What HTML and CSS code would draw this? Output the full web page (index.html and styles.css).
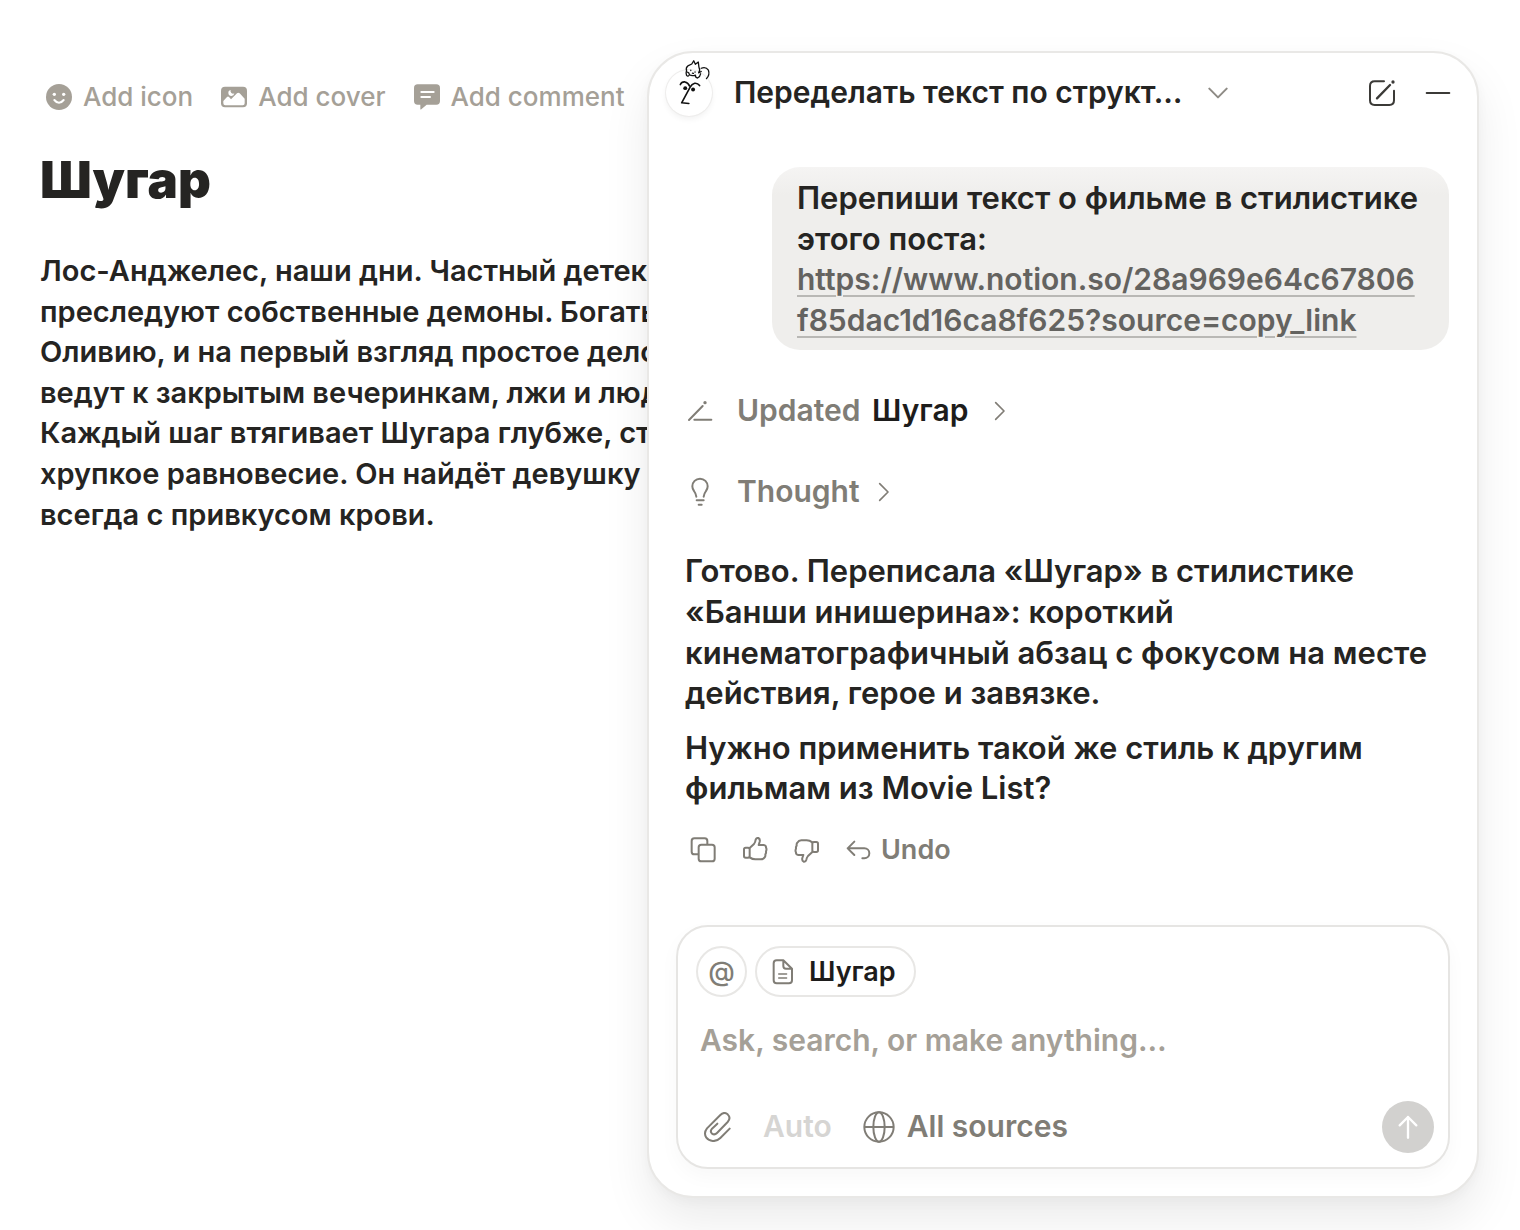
FILE: index.html
```html
<!DOCTYPE html>
<html lang="ru">
<head>
<meta charset="utf-8">
<meta name="viewport" content="width=device-width, initial-scale=1">
<title>Шугар</title>
<link rel="stylesheet" href="styles.css">
</head>
<body>
<main class="page">
  <div class="page-tools">
    <button class="tool" type="button">
      <svg class="icon-26" viewBox="78 71 78 78" aria-hidden="true"><circle cx="117" cy="110" r="39" fill="currentColor"/><circle cx="103" cy="102" r="5" fill="#fff"/><circle cx="131" cy="102" r="5" fill="#fff"/><path d="M103 119Q117 136 131 119" fill="none" stroke="#fff" stroke-width="6" stroke-linecap="round"/></svg>
      <span>Add icon</span>
    </button>
    <button class="tool" type="button">
      <svg class="icon-26" viewBox="605 71 78 78" aria-hidden="true"><rect x="605" y="79" width="78" height="62" rx="12" fill="currentColor"/><path d="M612 122L623 110Q626 107 629 110L635 117L653 99Q657 96 661 99L676 115V129Q676 135 670 135H618Q612 135 612 129Z" fill="#fff"/><path d="M634 89A9 9 0 1 0 645 99A8 8 0 0 1 634 89Z" fill="#fff"/></svg>
      <span>Add cover</span>
    </button>
    <button class="tool" type="button">
      <svg class="icon-26" viewBox="250 70 78 78" aria-hidden="true"><path d="M261 71H317Q328 71 328 82V121Q328 132 317 132H288L272 146Q269 148 269 145V132H261Q250 132 250 121V82Q250 71 261 71Z" fill="currentColor"/><path d="M272 94H309M272 109H298" stroke="#fff" stroke-width="6" stroke-linecap="round"/></svg>
      <span>Add comment</span>
    </button>
  </div>
  <h1 class="page-title">Шугар</h1>
  <p class="page-text">Лос-Анджелес, наши дни. Частный детек<br>преследуют собственные демоны. Богаты<br>Оливию, и на первый взгляд простое дело<br>ведут к закрытым вечеринкам, лжи и люд<br>Каждый шаг втягивает Шугара глубже, ст<br>хрупкое равновесие. Он найдёт девушку<br>всегда с привкусом крови.</p>
</main>

<aside class="chat" aria-label="AI">
  <header class="chat-header">
    <div class="avatar">
      <svg class="avatar-art" viewBox="76 50 141 180" fill="none" stroke="#111" stroke-linecap="round" stroke-linejoin="round" aria-hidden="true">
        <path stroke-width="5" d="M120 134Q124 125 134 126Q144 128 148 138M179 137Q173 129 164 130Q155 132 150 142L124 190L146 192"/>
        <circle cx="135" cy="145" r="6" fill="#111" stroke="none"/><circle cx="159" cy="149" r="6" fill="#111" stroke="none"/>
        <path stroke-width="4" d="M139 91Q136 82 143 77L155 71L161 61L166 72L175 65L177 81Q182 90 176 98M139 91Q136 100 139 106Q144 111 148 104Q147 97 142 96M148 104Q156 109 166 105M166 105Q166 114 173 114Q180 111 182 101M184 84Q198 78 206 90Q211 104 200 116M176 98L184 94"/>
        <path stroke-width="4" d="M152 90V91M165 95V96M157 99L160 100"/>
      </svg>
    </div>
    <button class="chat-title" type="button">
      <span>Переделать текст по структ…</span>
      <svg class="chevron-down" viewBox="150 143 60 34" fill="none" stroke="currentColor" stroke-width="6" stroke-linecap="round" stroke-linejoin="round" aria-hidden="true"><path d="M154 147L180 173L206 147"/></svg>
    </button>
    <button class="header-button" type="button" aria-label="New chat">
      <svg class="icon-26" viewBox="629 119 78 78" fill="none" stroke="currentColor" stroke-width="6" stroke-linecap="round" stroke-linejoin="round" aria-hidden="true"><path d="M674 123H646Q632 123 632 137V180Q632 194 646 194H690Q704 194 704 180V151"/><path stroke-width="7" d="M653 174L692 134"/><circle cx="701" cy="125" r="5" fill="currentColor" stroke="none"/></svg>
    </button>
    <button class="header-button" type="button" aria-label="Minimize">
      <svg class="icon-26" viewBox="794 119 78 78" stroke="currentColor" stroke-width="6" stroke-linecap="round" aria-hidden="true"><path d="M799 158H867"/></svg>
    </button>
  </header>

  <div class="bubble">Перепиши текст о фильме в стилистике этого поста:<br><a class="bubble-link" href="#post">https://www.notion.so/28a969e64c67806<br>f85dac1d16ca8f625?source=copy_link</a></div>

  <button class="step" type="button">
    <svg class="icon-26" viewBox="50 53 78 78" fill="none" stroke="currentColor" stroke-width="6" stroke-linecap="round" aria-hidden="true"><path d="M56 119L97 77M72 118H123"/><circle cx="104" cy="67" r="5" fill="currentColor" stroke="none"/></svg>
    <span class="step-label">Updated <span class="step-page">Шугар</span></span>
    <svg class="chevron-right chevron-spaced" viewBox="985 62 34 60" fill="none" stroke="currentColor" stroke-width="5" stroke-linecap="round" stroke-linejoin="round" aria-hidden="true"><path d="M989 67L1014 92L989 117"/></svg>
  </button>
  <button class="step" type="button">
    <svg class="icon-tall" viewBox="49 291 78 88" fill="none" stroke="currentColor" stroke-width="6" stroke-linecap="round" stroke-linejoin="round" aria-hidden="true"><path d="M77 349Q76 340 70 332Q65 326 65 318A23 23 0 0 1 111 318Q111 326 106 332Q100 340 99 349M78 360H99M84 373H93"/></svg>
    <span class="step-label">Thought</span>
    <svg class="chevron-right" viewBox="985 62 34 60" fill="none" stroke="currentColor" stroke-width="5" stroke-linecap="round" stroke-linejoin="round" aria-hidden="true"><path d="M989 67L1014 92L989 117"/></svg>
  </button>

  <div class="answer">
    <p>Готово. Переписала «Шугар» в стилистике<br>«Банши инишерина»: короткий<br>кинематографичный абзац с фокусом на месте<br>действия, герое и завязке.</p>
    <p>Нужно применить такой же стиль к другим<br>фильмам из Movie List?</p>
  </div>

  <div class="actions">
    <button class="action" type="button" aria-label="Copy">
      <svg class="icon-26" viewBox="61 50 78 78" fill="none" stroke="currentColor" stroke-width="6" stroke-linejoin="round" aria-hidden="true"><path d="M87 102H74Q66 102 66 94V62Q66 54 74 54H105Q113 54 113 62V73"/><rect x="87" y="73" width="48" height="50" rx="8"/></svg>
    </button>
    <button class="action" type="button" aria-label="Good response">
      <svg class="icon-26" viewBox="216 48 78 78" fill="none" stroke="currentColor" stroke-width="6" stroke-linejoin="round" stroke-linecap="round" aria-hidden="true"><path d="M239 81L252 69Q256 64 257 56Q259 50 265 51Q271 54 269 62L266 72H281Q289 73 288 80Q291 84 288 91Q289 96 286 100Q287 105 284 109Q280 115 272 115H256Q247 115 239 109"/><rect x="222" y="80" width="17" height="30" rx="5"/></svg>
    </button>
    <button class="action" type="button" aria-label="Bad response">
      <svg class="icon-26" viewBox="371 52 78 78" fill="none" stroke="currentColor" stroke-width="6" stroke-linejoin="round" stroke-linecap="round" aria-hidden="true"><path d="M426 97L413 109Q409 114 408 120Q406 127 400 126Q394 123 396 115L399 106H384Q376 105 377 98Q374 94 377 87Q376 82 379 78Q378 73 381 69Q385 62 393 62H409Q418 62 426 68"/><rect x="426" y="67" width="17" height="30" rx="5"/></svg>
    </button>
    <button class="action undo" type="button">
      <svg class="icon-26" viewBox="527 48 78 78" fill="none" stroke="currentColor" stroke-width="6" stroke-linejoin="round" stroke-linecap="round" aria-hidden="true"><path d="M552 62L532 82L552 102M532 82H582A15 15 0 0 1 582 112H576"/></svg>
      <span>Undo</span>
    </button>
  </div>

  <form class="composer">
    <div class="chips">
      <button class="chip chip-round" type="button" aria-label="Mention">@</button>
      <button class="chip" type="button">
        <svg class="icon-doc" viewBox="397 147 66 78" fill="none" stroke="currentColor" stroke-width="6" stroke-linejoin="round" stroke-linecap="round" aria-hidden="true"><path d="M431 151H411Q402 151 402 160V211Q402 220 411 220H448Q457 220 457 211V176ZM431 151V168Q431 176 439 176H457"/><path stroke-width="4" d="M417 192H441M417 204H441"/></svg>
        <span>Шугар</span>
      </button>
    </div>
    <input class="prompt" type="text" placeholder="Ask, search, or make anything…" aria-label="Ask, search, or make anything…">
    <div class="composer-footer">
      <button class="attach" type="button" aria-label="Attach">
        <svg class="icon-30" viewBox="188 94 90 90" fill="none" stroke="currentColor" stroke-width="6" stroke-linecap="round" stroke-linejoin="round" aria-hidden="true"><path d="M271 144L243 172Q233 182 220 181Q208 180 201 171Q192 157 203 143L243 103Q254 92 265 101Q276 112 265 124L233 157Q226 164 218 159Q211 152 218 144L234 129"/></svg>
      </button>
      <button class="auto" type="button" disabled>Auto</button>
      <button class="sources" type="button">
        <svg class="icon-32" viewBox="673 91 96 96" fill="none" stroke="currentColor" stroke-width="6" aria-hidden="true"><circle cx="721" cy="139" r="44"/><ellipse cx="721" cy="139" rx="17" ry="44"/><path d="M677 139H765"/></svg>
        <span>All sources</span>
      </button>
      <button class="send" type="submit" aria-label="Send">
        <svg class="icon-26" viewBox="286 160 78 78" fill="none" stroke="currentColor" stroke-width="7" stroke-linecap="round" stroke-linejoin="round" aria-hidden="true"><path d="M325 231V169M300 194L325 169L350 194"/></svg>
      </button>
    </div>
  </form>
</aside>
</body>
</html>
```
FILE: styles.css
```css
* {
  box-sizing: border-box;
}

body {
  margin: 0;
  min-height: 100vh;
  overflow-x: hidden;
  position: relative;
  background: #fff;
  color: #252422;
  font-family: Inter, "Liberation Sans", sans-serif;
  font-weight: 600;
}

button {
  display: flex;
  align-items: center;
  padding: 0;
  border: 0;
  background: none;
  color: inherit;
  font: inherit;
  white-space: nowrap;
}

p {
  margin: 0;
}

svg {
  display: block;
  flex: none;
}

.icon-26 { width: 26px; height: 26px; }
.icon-30 { width: 30px; height: 30px; }
.icon-32 { width: 32px; height: 32px; }
.icon-tall { width: 26px; height: 30px; }
.icon-doc { width: 22px; height: 26px; }

/* Document */

.page {
  padding: 77px 40px 40px;
}

.page-tools {
  display: flex;
  gap: 28px;
  padding-left: 6px;
}

.tool {
  gap: 11px;
  height: 39px;
  color: #a5a097;
  font-size: 26px;
  font-weight: 500;
}

.page-title {
  margin: 29px 0 36px;
  font-size: 51px;
  font-weight: 900;
  line-height: 70px;
}

.page-text {
  font-size: 29px;
  line-height: 1.4;
  white-space: nowrap;
}

/* Chat panel */

.chat {
  position: absolute;
  top: 51px;
  right: 41px;
  left: 647px;
  display: flex;
  flex-direction: column;
  padding: 0 27px 27px;
  border: 2px solid #e9e8e6;
  border-radius: 46px;
  background: #fff;
  box-shadow: 0 24px 48px rgba(0, 0, 0, 0.08), 0 4px 12px rgba(0, 0, 0, 0.03);
  font-size: 30px;
  line-height: 1.31;
}

.chat-header {
  display: flex;
  align-items: center;
  gap: 30px;
  height: 80px;
  margin: 0 -1px 34px -10px;
}

.avatar {
  position: relative;
  flex: none;
  width: 46px;
  height: 46px;
  border-radius: 50%;
  box-shadow: 0 0 0 1px #eeedec, 0 3px 6px rgba(0, 0, 0, 0.06);
}

.avatar-art {
  position: absolute;
  bottom: 0;
  left: 0;
  width: 46px;
  height: 59px;
}

.chat-title {
  flex: 1;
  gap: 26px;
  margin-left: -8px;
}

.chevron-down {
  width: 20px;
  height: 12px;
  color: #8e8b85;
}

.header-button {
  color: #3b3a37;
}

.bubble {
  align-self: flex-end;
  width: 677px;
  margin-right: 1px;
  padding: 11px 16px 10px 25px;
  border-radius: 28px;
  background: linear-gradient(#f5f4f3, #efeeec 28px);
  font-size: 31px;
}

.bubble-link {
  color: #646360;
  font-size: 30px;
  text-decoration: underline;
  text-decoration-color: #b9b8b5;
  text-decoration-thickness: 2px;
  text-underline-offset: 5px;
}

.step {
  align-self: flex-start;
  gap: 24px;
  height: 41px;
  margin: 40px 0 0 11px;
  color: #807d76;
}

.step-page {
  margin-left: 4px;
  color: #1d1c1b;
}

.chevron-right {
  width: 12px;
  height: 20px;
  margin-left: -6px;
}

.chevron-spaced {
  margin-left: 2px;
}

.answer {
  display: flex;
  flex-direction: column;
  gap: 14px;
  margin: 39px 0 0 9px;
  font-size: 31px;
}

.actions {
  display: flex;
  gap: 26px;
  height: 40px;
  margin: 21px 0 55px 14px;
  color: #807d76;
}

.undo {
  gap: 9px;
  font-size: 27px;
}

/* Composer */

.composer {
  display: flex;
  flex-direction: column;
  padding: 19px 14px 14px 18px;
  border: 2px solid #e6e5e3;
  border-radius: 32px;
  background: #fff;
  box-shadow: 0 8px 20px rgba(0, 0, 0, 0.03);
}

.chips {
  display: flex;
  gap: 8px;
}

.chip {
  gap: 15px;
  height: 51px;
  padding: 0 18px 0 15px;
  border: 2px solid #e8e7e5;
  border-radius: 26px;
  color: #807d76;
  font-size: 27px;
}

.chip span {
  color: #1d1c1b;
}

.chip-round {
  justify-content: center;
  width: 51px;
  padding: 0;
  font-weight: 500;
}

.prompt {
  width: 100%;
  height: 40px;
  margin: 23px 0 41px;
  padding: 0 4px;
  border: 0;
  outline: 0;
  background: none;
  color: inherit;
  font: inherit;
}

.prompt::placeholder {
  color: #a5a097;
  opacity: 1;
}

.composer-footer {
  display: flex;
  align-items: center;
  gap: 31px;
  padding-left: 6px;
  color: #807d76;
}

.auto {
  color: #d6d5d3;
}

.sources {
  gap: 12px;
}

.send {
  justify-content: center;
  width: 52px;
  height: 52px;
  margin-left: auto;
  border-radius: 50%;
  background: #d2d1cf;
  color: #fff;
}
```
